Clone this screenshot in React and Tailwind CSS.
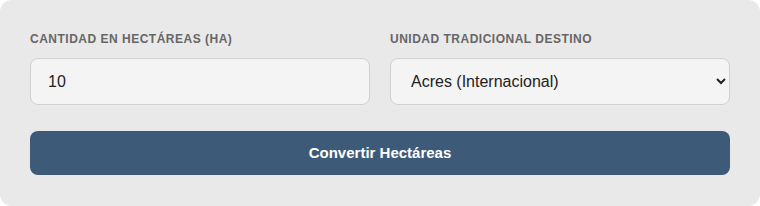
import React from 'react';

export default function App() {
  return (
    <div className="w-[760px] h-[206px] bg-white" style={{ fontFamily: '"Liberation Sans", Arial, sans-serif' }}>
      <div className="h-[206px] rounded-[12px] bg-[#e9e9e9] px-[30px] pt-[30px] pb-[30px] flex flex-col">
        <div className="grid grid-cols-2 gap-[20px]">
          <div className="flex flex-col">
            <label className="text-[12px] font-bold uppercase tracking-[0.5px] text-[#666] mb-[10px] leading-[18px]">
              Cantidad en Hectáreas (ha)
            </label>
            <input
              defaultValue="10"
              className="h-[47px] rounded-[8px] border border-[#d2d2d2] bg-[#f4f4f4] px-[17px] text-[16px] text-[#222] outline-none"
            />
          </div>
          <div className="flex flex-col">
            <label className="text-[12px] font-bold uppercase tracking-[0.5px] text-[#666] mb-[10px] leading-[18px]">
              Unidad Tradicional Destino
            </label>
            <select className="h-[47px] rounded-[8px] border border-[#d2d2d2] bg-[#f4f4f4] px-[16px] text-[16px] text-[#222] outline-none">
              <option>Acres (Internacional)</option>
            </select>
          </div>
        </div>
        <button className="mt-[26px] h-[44px] w-full rounded-[8px] bg-[#3d5a78] text-white text-[15px] font-bold">
          Convertir Hectáreas
        </button>
      </div>
    </div>
  );
}
